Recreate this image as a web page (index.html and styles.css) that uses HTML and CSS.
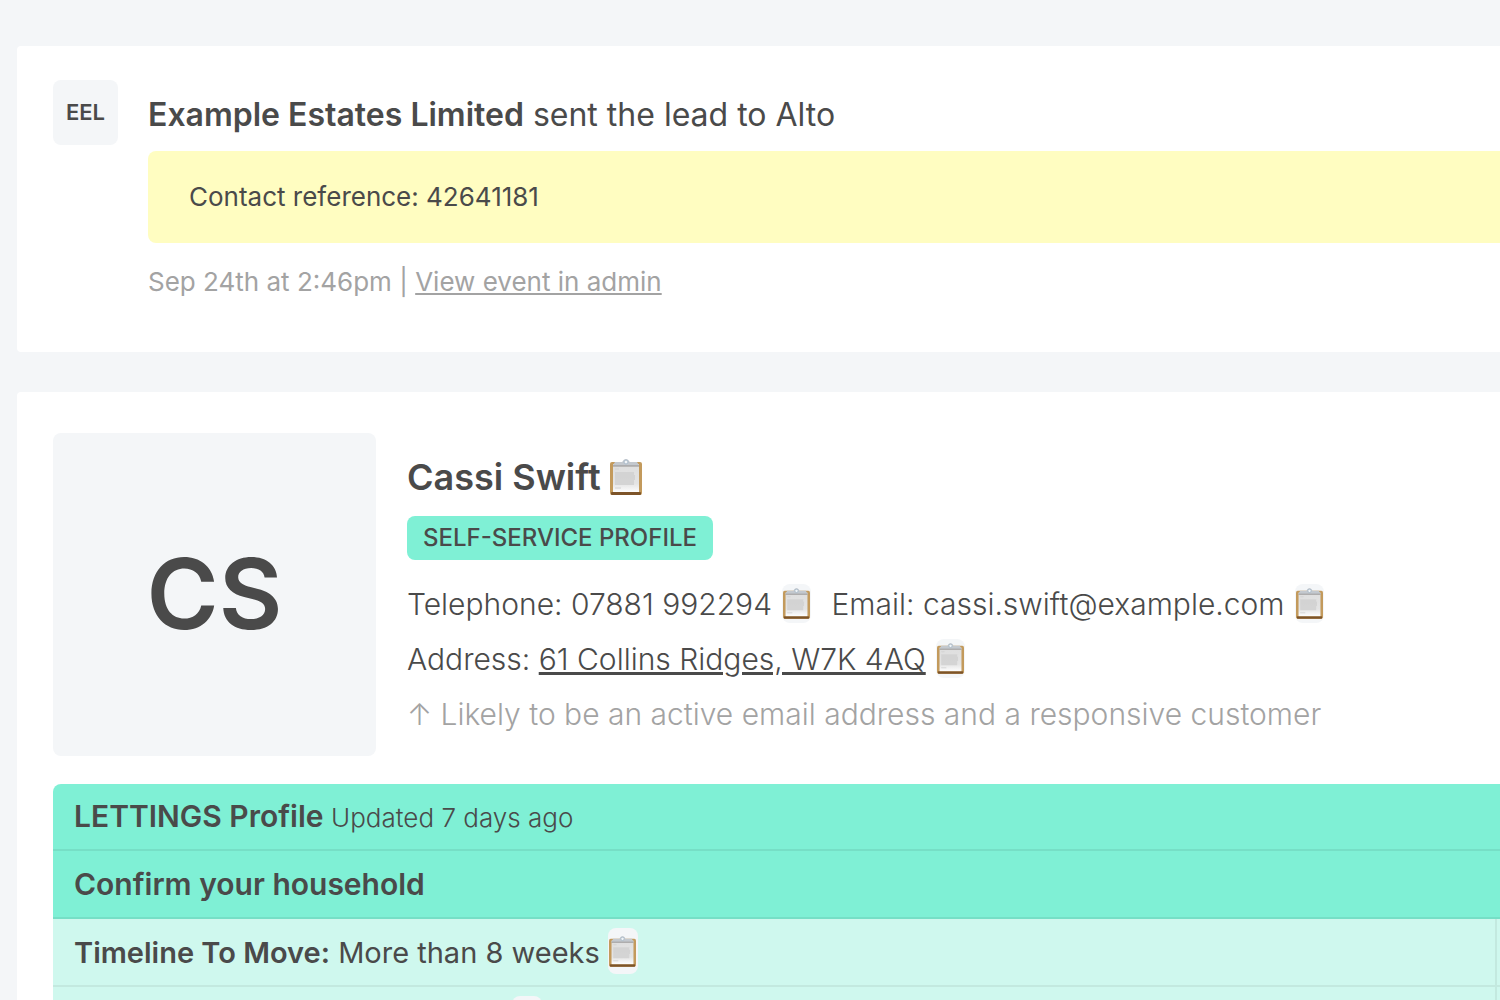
FILE: index.html
```
<!DOCTYPE html>
<html lang="en">
<head>
  <meta charset="UTF-8">
  <meta name="viewport" content="width=device-width, initial-scale=1.0">
  <title>Lead - Cassi Swift</title>
  <link rel="stylesheet" href="styles.css">
</head>
<body>
  <svg class="defs" aria-hidden="true">
    <defs>
      <linearGradient id="paper" x1="0" y1="0" x2="0" y2="1">
        <stop offset="0" stop-color="#dedede"/>
        <stop offset="0.7" stop-color="#e4e4e4"/>
        <stop offset="1" stop-color="#fdfdfd"/>
      </linearGradient>
      <symbol id="clipboard" viewBox="0 0 32 36">
        <rect x="0" y="3" width="32" height="33" rx="2" fill="#c39a5c"/>
        <rect x="1" y="33" width="30" height="3" rx="1" fill="#7d5429"/>
        <rect x="3" y="5" width="26" height="28" fill="url(#paper)"/>
        <path d="M5 13h19v3h1v5h-1v5H5z" fill="#cfcfcf" opacity=".8"/>
        <path d="M5 10h4M5 29h6" stroke="#d2d2d2"/>
        <path d="M3 6l2-3h7c1 0 1-3 4-3s3 3 4 3h7l2 3v1H3z" fill="#c3c8ce"/>
        <path d="M3 7h26" stroke="#94918f" stroke-width="1"/>
        <circle cx="16" cy="3" r="2" fill="#f1f4f7" stroke="#a9bac9"/>
      </symbol>
    </defs>
  </svg>

  <main class="page">
    <section class="card event">
      <div class="avatar avatar-small">EEL</div>
      <div class="event-body">
        <p class="event-title"><strong>Example Estates Limited</strong> sent the lead to Alto</p>
        <div class="note">Contact reference: 42641181</div>
        <p class="event-meta">Sep 24th at 2:46pm | <a href="#">View event in admin</a></p>
      </div>
    </section>

    <section class="card">
      <div class="customer">
        <div class="avatar avatar-large">CS</div>
        <div class="customer-info">
          <h1>Cassi Swift <button class="copy copy-large" aria-label="Copy name"><svg><use href="#clipboard"/></svg></button></h1>
          <span class="badge">SELF-SERVICE PROFILE</span>
          <p class="contact">
            <span>Telephone: 07881 992294 <button class="copy" aria-label="Copy telephone"><svg><use href="#clipboard"/></svg></button></span>
            <span>Email: cassi.swift@example.com <button class="copy" aria-label="Copy email"><svg><use href="#clipboard"/></svg></button></span>
          </p>
          <p>Address: <a href="#">61 Collins Ridges, W7K 4AQ</a> <button class="copy" aria-label="Copy address"><svg><use href="#clipboard"/></svg></button></p>
          <p class="hint">↑ Likely to be an active email address and a responsive customer</p>
        </div>
      </div>

      <div class="profile-wrap">
        <table class="profile">
          <thead>
            <tr><th colspan="2">LETTINGS Profile <small>Updated 7 days ago</small></th></tr>
            <tr><th colspan="2">Confirm your household</th></tr>
          </thead>
          <tbody>
            <tr>
              <td><strong>Timeline To Move:</strong> More than 8 weeks <button class="copy copy-tall" aria-label="Copy timeline"><svg><use href="#clipboard"/></svg></button></td>
              <td></td>
            </tr>
            <tr>
              <td><span class="blank"></span><button class="copy copy-tall" aria-label="Copy value"><svg><use href="#clipboard"/></svg></button></td>
              <td></td>
            </tr>
          </tbody>
        </table>
      </div>
    </section>
  </main>
</body>
</html>
```

FILE: styles.css
```
* {
  box-sizing: border-box;
}
body {
  margin: 0;
  background-color: #f4f6f8;
  color: #4a4a4a;
  font-family: Inter, "Liberation Sans", sans-serif;
  overflow-x: hidden;
}
p, h1 {
  margin: 0;
}
a {
  color: inherit;
}
strong {
  font-weight: 600;
}
.defs {
  display: block;
  width: 0;
  height: 0;
}
.page {
  display: flex;
  flex-direction: column;
  gap: 40px;
  padding: 46px 0 0 17px;
}
.card {
  background-color: #fff;
  border-radius: 4px 0 0 4px;
  padding-left: 36px;
}

/* event */
.event {
  display: flex;
  gap: 30px;
  padding-top: 34px;
  padding-bottom: 50px;
}
.event-body {
  flex: 1;
}
.avatar {
  display: flex;
  flex-shrink: 0;
  align-items: center;
  justify-content: center;
  padding-bottom: 2px;
  background-color: #f4f6f8;
  border-radius: 8px;
  font-weight: 600;
}
.avatar-small {
  width: 65px;
  height: 65px;
  font-size: 22px;
}
.avatar-large {
  width: 323px;
  height: 323px;
  font-size: 98px;
}
.event-title {
  padding-bottom: 2px;
  font-size: 32px;
  line-height: 69px;
}
.note {
  padding: 26px 41px;
  background-color: #fffdc1;
  border-radius: 8px 0 0 8px;
  font-size: 26px;
  line-height: 40px;
}
.event-meta {
  margin-top: 19px;
  color: #a3a3a3;
  font-size: 26px;
  line-height: 40px;
}

/* customer */
.customer {
  display: flex;
  gap: 31px;
  padding-top: 41px;
}
.customer-info {
  padding-top: 20px;
  font-size: 30px;
  font-weight: 300;
  line-height: 55px;
}
h1 {
  font-size: 36px;
  font-weight: 600;
  line-height: 48px;
}
.badge {
  display: block;
  width: fit-content;
  margin: 15px 0 17px;
  padding: 0 16px;
  background-color: #7ff0d5;
  border-radius: 8px;
  font-size: 24px;
  font-weight: 500;
  line-height: 44px;
}
.contact {
  display: flex;
  flex-wrap: wrap;
  gap: 0 20px;
}
.hint {
  color: #a3a3a3;
}
.copy {
  display: inline-flex;
  align-items: center;
  justify-content: center;
  width: 29px;
  height: 39px;
  margin-left: 2px;
  padding: 0;
  border: none;
  border-radius: 8px;
  background-color: #f4f6f8;
  vertical-align: -4px;
  cursor: pointer;
}
.copy svg {
  width: 27px;
  height: 31px;
}
.copy-large {
  width: 32px;
  margin-left: 0;
  background: none;
  vertical-align: -5px;
}
.copy-large svg {
  width: 32px;
  height: 36px;
}
.copy-tall {
  width: 30px;
  height: 46px;
  margin-left: 0;
}

/* profile table */
.profile-wrap {
  margin-top: 28px;
  overflow: hidden;
  border-radius: 8px 0 0 0;
}
.profile {
  width: calc(200% - 6px);
  border-collapse: separate;
  border-spacing: 0;
  table-layout: fixed;
  font-size: 30px;
  line-height: 46px;
}
th, td {
  height: 68px;
  padding: 0 21px;
  border-bottom: 2px solid #c3e9df;
  text-align: left;
}
th {
  background-color: #7ff0d5;
  border-bottom-color: #76dfc6;
  font-weight: 600;
}
tr:first-child th {
  height: 67px;
}
th small {
  font-size: 26px;
  font-weight: 300;
}
td {
  background-color: #cff8ee;
  font-size: 29px;
}
td:first-child {
  border-right: 2px solid #c3e9df;
}
.blank {
  display: inline-block;
  width: 438px;
}
```
